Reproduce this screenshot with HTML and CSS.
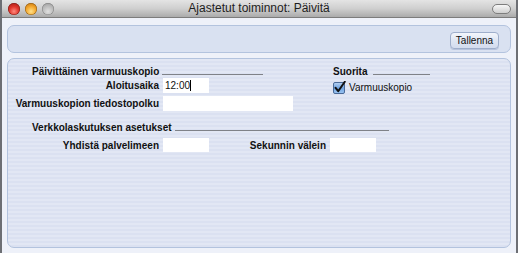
FILE: index.html
```html
<!DOCTYPE html>
<html>
<head>
<meta charset="utf-8">
<link rel="stylesheet" href="styles.css">
</head>
<body>
<div class="window">
  <div class="titlebar">
    <div class="lights">
      <span class="light red"></span>
      <span class="light orange"></span>
      <span class="light gray"></span>
    </div>
    <div class="title">Ajastetut toiminnot: Päivitä</div>
    <div class="pill-wrap"><span class="pill"></span></div>
  </div>
  <div class="content">
    <div class="toolbar">
      <button class="btn">Tallenna</button>
    </div>
    <div class="panel">
      <div class="top">
        <div class="col-left">
          <div class="heading h-backup"><span>Päivittäinen varmuuskopio</span><i class="rule"></i></div>
          <div class="row">
            <span class="label">Aloitusaika</span>
            <span class="field w46">12:00<i class="caret"></i></span>
          </div>
          <div class="row r2">
            <span class="label">Varmuuskopion tiedostopolku</span>
            <span class="field w130"></span>
          </div>
        </div>
        <div class="col-right">
          <div class="heading h-run"><span>Suorita</span><i class="rule"></i></div>
          <div class="check">
            <svg class="cb" width="13" height="13" viewBox="0 0 13 13">
              <defs>
                <linearGradient id="cbg" x1="0" y1="0" x2="0" y2="1">
                  <stop offset="0" stop-color="#b9d3f2"/>
                  <stop offset="0.5" stop-color="#6fa3e0"/>
                  <stop offset="1" stop-color="#9cc6f3"/>
                </linearGradient>
              </defs>
              <rect x="0.5" y="1.5" width="11" height="11" rx="1.5" fill="url(#cbg)" stroke="#4a6a98"/>
              <path d="M2.6 6.8 L5.2 10.2 L11.8 0.8" fill="none" stroke="#111" stroke-width="2" stroke-linecap="round" stroke-linejoin="round"/>
            </svg>
            <span>Varmuuskopio</span>
          </div>
        </div>
      </div>
      <div class="heading h-net"><span>Verkkolaskutuksen asetukset</span><i class="rule"></i></div>
      <div class="row r3">
        <span class="label">Yhdistä palvelimeen</span>
        <span class="field w46"></span>
        <span class="label l2">Sekunnin välein</span>
        <span class="field w46"></span>
      </div>
    </div>
  </div>
</div>
</body>
</html>
```

FILE: styles.css
```css
* { box-sizing: border-box; }
html, body { margin: 0; padding: 0; }
body {
  width: 518px;
  height: 253px;
  overflow: hidden;
  background: #6d6f74;
  padding: 0 2px;
  font-family: "Liberation Sans", Arial, sans-serif;
}
.window {
  width: 514px;
  height: 253px;
  background: #eef1f9;
  display: flex;
  flex-direction: column;
}
.titlebar {
  height: 18px;
  flex: none;
  display: grid;
  grid-template-columns: 1fr auto 1fr;
  align-items: center;
  background: linear-gradient(to bottom, #e4e4e4 0%, #cfcfcf 50%, #ababab 100%);
  border-bottom: 1px solid #7c7c7c;
}
.lights {
  display: flex;
  gap: 5px;
  padding-left: 6px;
  align-items: center;
}
.light {
  width: 12px;
  height: 12px;
  border-radius: 50%;
  display: block;
}
.light.red {
  background: radial-gradient(circle at 50% 70%, #ff8a7e 0%, #e0362c 45%, #9b140d 100%);
  box-shadow: inset 0 0 0 0.5px #7a1a14;
}
.light.orange {
  background: radial-gradient(circle at 50% 70%, #ffe08a 0%, #f2a52a 50%, #b4650b 100%);
  box-shadow: inset 0 0 0 0.5px #8a5810;
}
.light.gray {
  background: radial-gradient(circle at 50% 70%, #e0e0e0 0%, #b8b8b8 55%, #8e8e8e 100%);
  box-shadow: inset 0 0 0 0.5px #7e7e7e;
}
.title {
  font-size: 12px;
  color: #1e1e1e;
  line-height: 17px;
  white-space: nowrap;
}
.pill-wrap {
  display: flex;
  justify-content: flex-end;
  padding-right: 5px;
}
.pill {
  display: block;
  width: 19px;
  height: 10px;
  border-radius: 5px;
  border: 1px solid #7d7d7d;
  background: linear-gradient(to bottom, #f7f7f7, #cfcfcf);
}
.content {
  flex: 1;
  padding: 7px 5px 0 5px;
  display: flex;
  flex-direction: column;
  gap: 5px;
}
.toolbar {
  height: 28px;
  border: 1px solid #b3c3de;
  border-radius: 7px;
  background: #d9e1f1;
  display: flex;
  justify-content: flex-end;
  align-items: center;
  padding-right: 11px;
  padding-top: 2px;
}
.btn {
  width: 49px;
  height: 17px;
  padding: 0;
  margin: 0;
  font-family: "Liberation Sans", Arial, sans-serif;
  font-size: 10px;
  color: #111;
  border: 1px solid #9eaecb;
  border-radius: 4px;
  background: linear-gradient(to bottom, #f3f6fc 0%, #dfe6f3 50%, #d3dcee 100%);
  box-shadow: 0 1px 0 rgba(120,140,180,0.35);
}
.panel {
  height: 190px;
  border: 1px solid #b3c3de;
  border-radius: 7px;
  background: repeating-linear-gradient(to bottom, #e2e7f4 0px, #e2e7f4 2px, #dbe1f1 2px, #dbe1f1 4px);
  padding-top: 7px;
  font-size: 10px;
  color: #111;
}
.top {
  display: flex;
}
.col-left {
  width: 325px;
  display: flex;
  flex-direction: column;
}
.col-right {
  display: flex;
  flex-direction: column;
}
.heading {
  display: flex;
  height: 12px;
  line-height: 12px;
  font-weight: bold;
  gap: 3px;
}
.heading span { white-space: nowrap; }
.rule {
  flex: 1;
  height: 1px;
  background: #7f8288;
  align-self: flex-end;
  margin-bottom: 3px;
}
.h-backup { margin-left: 24px; width: 231px; }
.h-run { width: 97px; gap: 6px; }
.h-net { margin-left: 24px; width: 357px; margin-top: 11px; }
.row {
  display: flex;
  align-items: center;
  gap: 4px;
  height: 15px;
}
.r2 { margin-top: 3px; }
.r3 { margin-top: 4px; height: 14px; }
.label {
  width: 151px;
  text-align: right;
  font-weight: bold;
  white-space: nowrap;
}
.label.l2 { width: 113px; }
.field {
  height: 100%;
  background: #fff;
  display: flex;
  align-items: center;
  padding-left: 2px;
  font-size: 10px;
}
.w46 { width: 46px; }
.w130 { width: 130px; }
.caret {
  display: block;
  width: 1px;
  height: 11px;
  background: #000;
}
.check {
  display: flex;
  align-items: center;
  gap: 3px;
  height: 15px;
  margin-top: 2px;
}
.cb { display: block; }
```
